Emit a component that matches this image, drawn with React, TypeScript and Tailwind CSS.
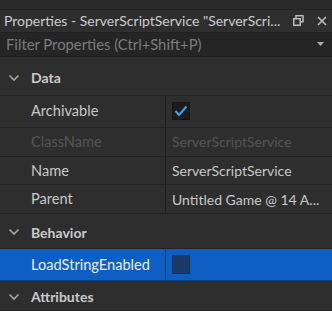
import React from "react";

const Chevron = () => (
  <svg width="12" height="8" viewBox="0 0 12 8" className="shrink-0">
    <path d="M1.5 1.5 L6 6 L10.5 1.5" fill="none" stroke="#a8a8a8" strokeWidth="1.6" />
  </svg>
);

function Header({ label, h }: { label: string; h: string }) {
  return (
    <div className={`flex items-center pt-[2px] border-b border-[#222222] bg-[#2e2e2e] ${h}`}>
      <div className="w-[31px] pl-[8px] flex items-center">
        <Chevron />
      </div>
      <span className="text-[14px] font-bold text-[#cacaca]">{label}</span>
    </div>
  );
}

function Row({
  label,
  h,
  children,
  dim,
  selected,
}: {
  label: string;
  h: string;
  children: React.ReactNode;
  dim?: boolean;
  selected?: boolean;
}) {
  return (
    <div
      className={`flex ${h} border-b ${selected ? "bg-[#0e5fc3] border-[#0a3f82]" : "bg-[#2e2e2e] border-[#222222]"}`}
    >
      <div
        className={`w-[165px] shrink-0 pl-[31px] flex items-center text-[14.6px] whitespace-nowrap ${
          selected ? "text-[#e8eef8]" : dim ? "text-[#555555]" : "text-[#c8c8c8]"
        }`}
      >
        {label}
      </div>
      <div className={`w-px ${selected ? "bg-[#0a3572]" : "bg-[#1f1f1f]"}`} />
      <div
        className={`flex-1 min-w-0 pl-[6px] flex items-center text-[14px] ${
          dim ? "text-[#555555]" : "text-[#c8c8c8]"
        } whitespace-nowrap overflow-hidden`}
      >
        {children}
      </div>
    </div>
  );
}

export default function App() {
  return (
    <div
      className="w-[332px] h-[311px] overflow-hidden bg-[#2e2e2e] flex flex-col"
      style={{ fontFamily: "Lato, 'Noto Sans', sans-serif" }}
    >
      <div className="h-[10px] bg-[#2a2a2a] border-b border-[#222222]" />
      <div className="h-[23px] flex items-center pl-[4px] pr-[5px] bg-[#2e2e2e] border-b border-[#202020]">
        <span className="flex-1 text-[14px] text-[#cccccc] whitespace-nowrap overflow-hidden">
          Properties - ServerScriptService "ServerScri...
        </span>
        <svg width="11" height="11" viewBox="0 0 11 11" className="ml-[9px]">
          <rect x="3" y="0.75" width="7" height="6" fill="none" stroke="#bdbdbd" strokeWidth="1.5" />
          <rect x="0.75" y="3.75" width="6.5" height="6.5" fill="#2e2e2e" stroke="#bdbdbd" strokeWidth="1.5" />
        </svg>
        <svg width="10" height="10" viewBox="0 0 10 10" className="ml-[13px]">
          <path d="M1 1 L9 9 M9 1 L1 9" stroke="#bdbdbd" strokeWidth="1.6" />
        </svg>
      </div>
      <div className="h-[24px] flex items-center pl-[6px] pr-[8px] bg-[#252525] border-b border-[#1c1c1c]">
        <span className="flex-1 text-[14.8px] text-[#7c7c7c] whitespace-nowrap">
          Filter Properties (Ctrl+Shift+P)
        </span>
        <svg width="7" height="4" viewBox="0 0 7 4">
          <path d="M0 0 L7 0 L3.5 4 Z" fill="#b0b0b0" />
        </svg>
      </div>
      <div className="h-[2px] bg-[#2e2e2e]" />
      <Header label="Data" h="h-[37px]" />
      <Row label="Archivable" h="h-[32px]">
        <div className="w-[18px] h-[18px] bg-[#1b1b1b] border border-[#161616] flex items-center justify-center">
          <svg width="14" height="12" viewBox="0 0 14 12">
            <path d="M1.5 6 L5 10 L12.5 1.5" fill="none" stroke="#3ba3f0" strokeWidth="2" />
          </svg>
        </div>
      </Row>
      <Row label="ClassName" h="h-[29px]" dim>
        ServerScriptService
      </Row>
      <Row label="Name" h="h-[29px]">
        ServerScriptService
      </Row>
      <Row label="Parent" h="h-[29px]">
        Untitled Game @ 14 A...
      </Row>
      <Header label="Behavior" h="h-[35px]" />
      <Row label="LoadStringEnabled" h="h-[32px]" selected>
        <div className="w-[18px] h-[19px] bg-[#1b3a68] border border-[#173158]" />
      </Row>
      <Header label="Attributes" h="h-[30px]" />
    </div>
  );
}
